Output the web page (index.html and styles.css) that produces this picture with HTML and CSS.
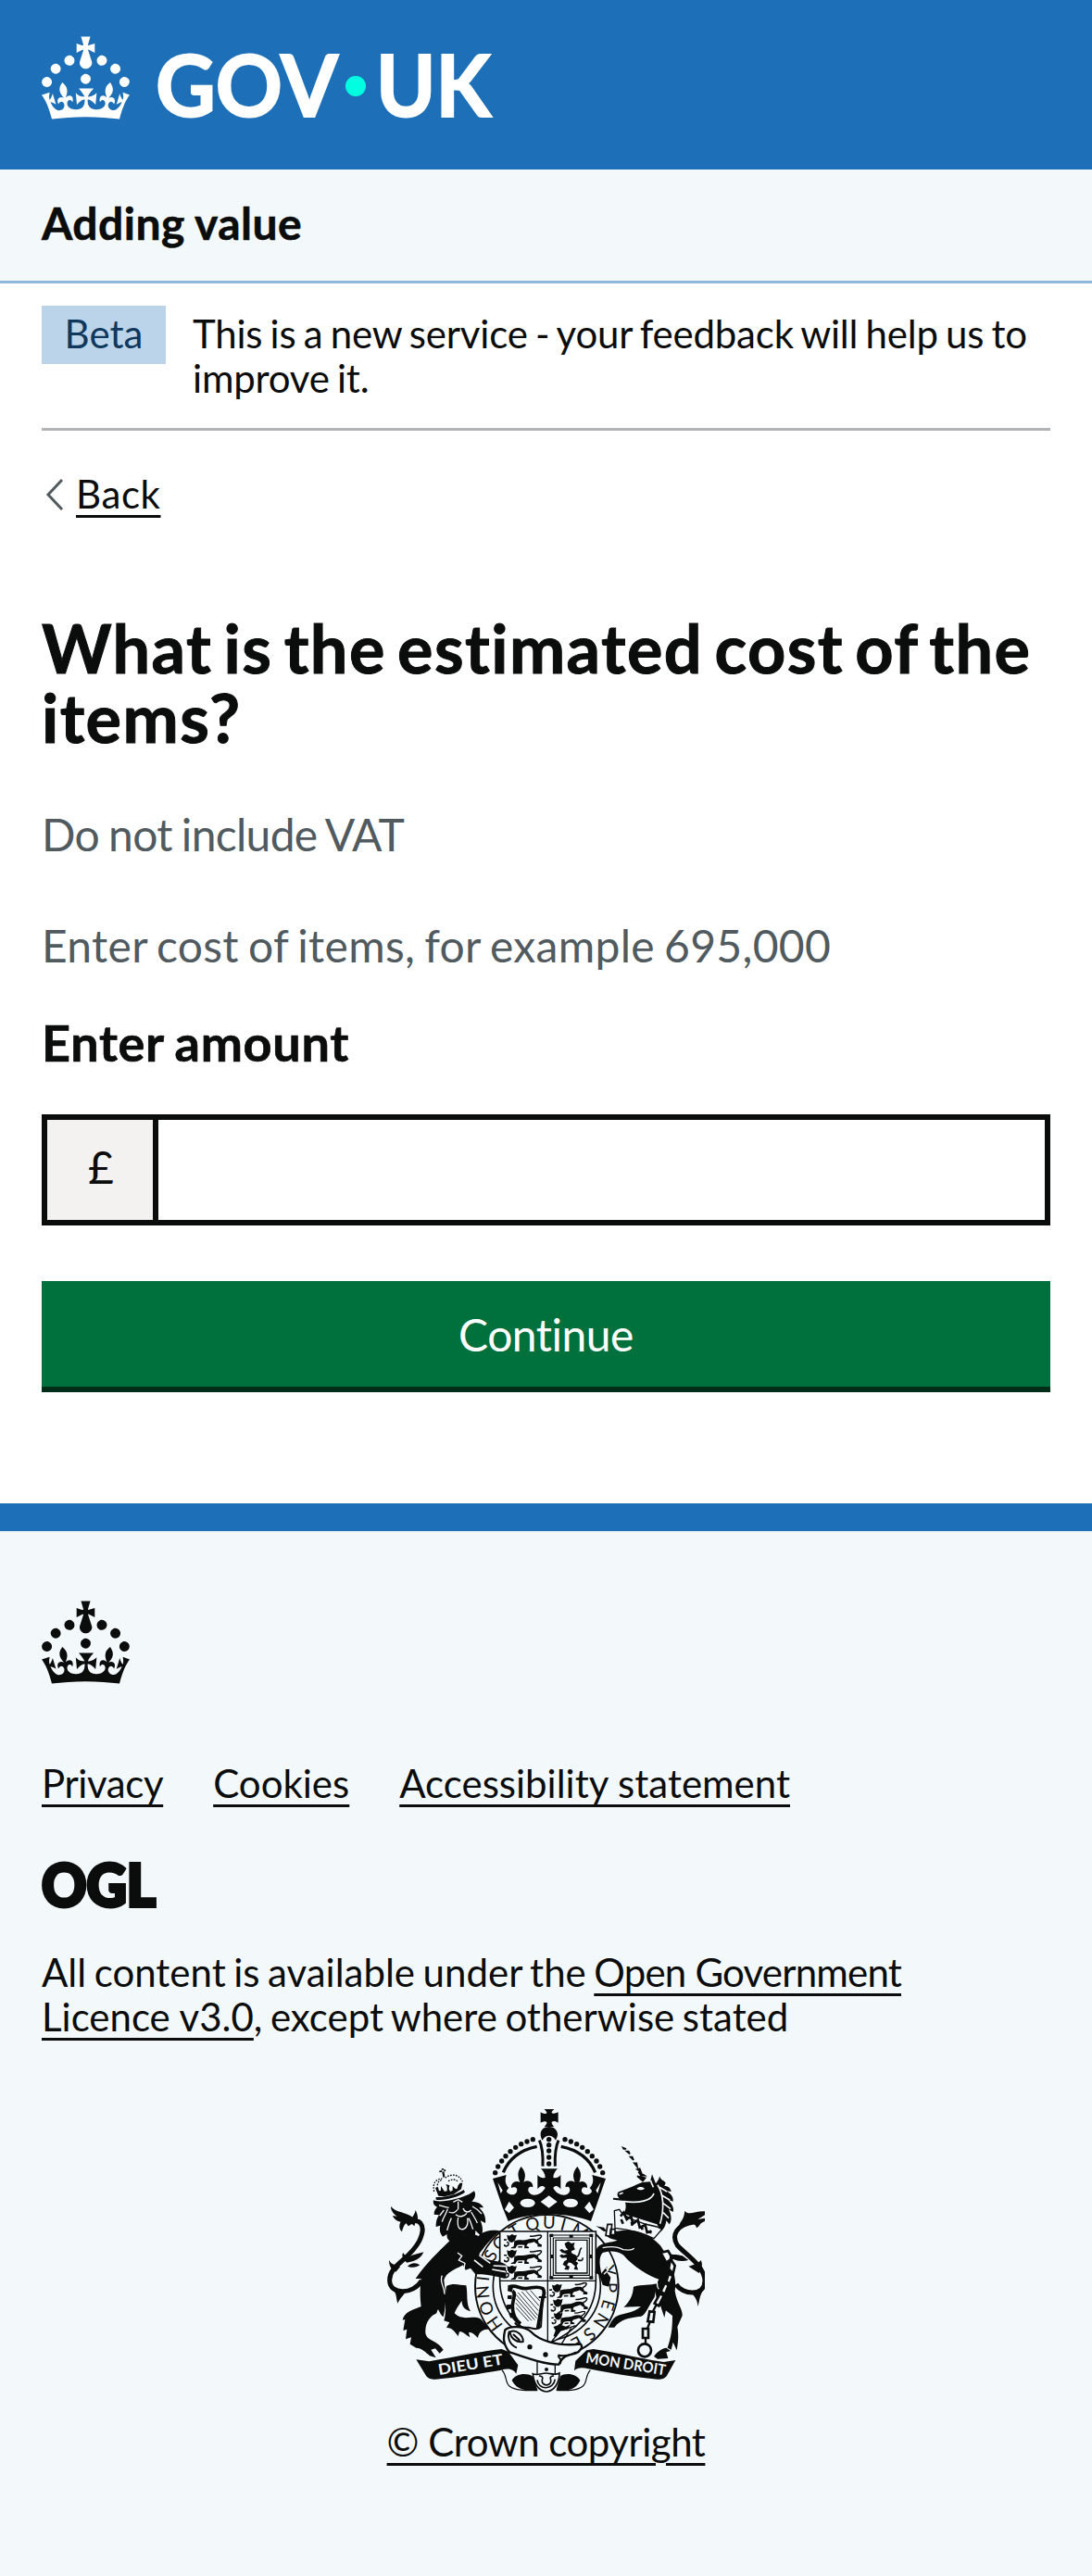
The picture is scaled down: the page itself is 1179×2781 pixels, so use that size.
FILE: index.html
```html
<!DOCTYPE html>
<html lang="en">
<head>
<meta charset="utf-8">
<meta name="viewport" content="width=device-width, initial-scale=1">
<title>What is the estimated cost of the items? - Adding value - GOV.UK</title>
<link rel="stylesheet" href="styles.css">
</head>
<body>
<svg class="defs" aria-hidden="true">
  <symbol id="tudor-crown" viewBox="0 0 32 30">
    <path fill-rule="evenodd" clip-rule="evenodd" d="M22.6 10.4c-1 .4-2-.1-2.4-1-.4-.9.1-2 1-2.4.9-.4 2 .1 2.4 1s-.1 2-1 2.4m-5.9 6.7c-.9.4-2-.1-2.4-1-.4-.9.1-2 1-2.4.9-.4 2 .1 2.4 1s-.1 2-1 2.4m10.8-3.7c-1 .4-2-.1-2.4-1-.4-.9.1-2 1-2.4.9-.4 2 .1 2.4 1s0 2-1 2.4m3.3 4.8c-1 .4-2-.1-2.4-1-.4-.9.1-2 1-2.4.9-.4 2 .1 2.4 1s-.1 2-1 2.4M17 4.7l2.3 1.2V2.5l-2.3.7-.2-.2.9-3h-3.4l.9 3-.2.2c-.1.1-2.3-.7-2.3-.7v3.4L15 4.7c.1.1.1.2.2.2l-1.3 4c-.1.2-.1.4-.1.6 0 1.1.8 2 1.9 2.2h.7c1-.2 1.9-1.1 1.9-2.1 0-.2 0-.4-.1-.6l-1.3-4c-.1-.2 0-.2.1-.3m-7.6 5.7c.9.4 2-.1 2.4-1 .4-.9-.1-2-1-2.4-.9-.4-2 .1-2.4 1s0 2 1 2.4m-5 3c.9.4 2-.1 2.4-1 .4-.9-.1-2-1-2.4-.9-.4-2 .1-2.4 1s.1 2 1 2.4m-3.2 4.8c.9.4 2-.1 2.4-1 .4-.9-.1-2-1-2.4-.9-.4-2 .1-2.4 1s0 2 1 2.4m14.8 11c4.4 0 8.6.3 12.3.8 1.1-4.5 2.4-7 3.7-8.8l-2.5-.9c.2 1.3.3 1.9 0 2.7-.4-.4-.8-1.1-1.1-2.3l-1.2 4c.7-.5 1.3-.8 2-.9-1.1 2.5-2.6 3.1-3.5 3-1.1-.2-1.7-1.2-1.5-2.1.3-1.2 1.5-1.5 2.1-.1 1.1-2.3-.8-3-2-2.3 1.9-1.9 2.1-3.5.6-5.6-2.1 1.6-2.1 3.2-1.2 5.5-1.2-1.4-3.2-.6-2.5 1.6.9-1.4 2.1-.5 1.9.8-.2 1.1-1.7 2.1-3.5 1.9-2.7-.2-2.9-2.1-2.9-3.6.7-.1 1.9.5 2.9 1.9l.4-4.3c-1.1 1.1-2.1 1.4-3.2 1.4.4-1.2 2.1-3 2.1-3h-5.4s1.7 1.9 2.1 3c-1.1 0-2.1-.2-3.2-1.4l.4 4.3c1-1.4 2.2-2 2.9-1.9-.1 1.5-.2 3.4-2.9 3.6-1.9.2-3.4-.8-3.5-1.9-.2-1.3 1-2.2 1.9-.8.7-2.3-1.2-3-2.5-1.6.9-2.2.9-3.9-1.2-5.5-1.5 2-1.3 3.7.6 5.6-1.2-.7-3.1 0-2 2.3.6-1.4 1.8-1.1 2.1.1.2.9-.3 1.9-1.5 2.1-.9.2-2.4-.5-3.5-3 .6 0 1.2.3 2 .9l-1.2-4c-.3 1.1-.7 1.9-1.1 2.3-.3-.8-.2-1.4 0-2.7l-2.9.9C1.3 23 2.6 25.5 3.7 30c3.7-.5 7.9-.8 12.3-.8"/>
  </symbol>
  <symbol id="passant" viewBox="0 0 130 46">
    <path d="M10 2l8 3 8-5 9 4 7-2-3 10-4 9-8 6-9-2-6-9z"/>
    <path d="M34 22c14-6 28 0 42-5 14-4 26-4 34 2l3 10 10 5-1 7-14-1 2-6-12-9c-8 4-18 3-22 7l-3 6 9 4-2 5H66l1-12c-10 0-18-1-24 1l-7 12H22l2-5 8-3z"/>
    <path d="M16 28l-7-3M16 28l-2 8-8 4M46 41h14M108 18c14-4 18-16 8-15-10 1-20 6-32 3" fill="none" stroke="#0b0c0c" stroke-width="4.5"/>
    <path d="M0 16l10 0-2 5-8-1zM0 32l8 4-3 5-6-3z"/>
  </symbol>
</svg>

<header class="header">
  <svg class="header-logo" viewBox="0 0 486 90" role="img" aria-label="GOV.UK">
    <use class="logo-crown" href="#tudor-crown" x="0" y="0" width="95" height="90"/>
    <g class="logo-word">
      <text x="123" y="87" textLength="197" lengthAdjust="spacingAndGlyphs">GOV</text>
      <text x="361" y="87" textLength="124" lengthAdjust="spacingAndGlyphs">UK</text>
    </g>
    <circle class="logo-dot" cx="339" cy="54" r="11"/>
  </svg>
</header>

<div class="service-navigation"><span class="service-name">Adding value</span></div>

<div class="container">
  <div class="phase-banner">
    <strong class="tag">Beta</strong>
    <span class="phase-text">This is a new service - your feedback will help us to improve it.</span>
  </div>

  <a class="back-link" href="#"><svg class="chevron" viewBox="0 0 22 36"><path d="M20 2L5 18l15 16"/></svg><span class="link back-text">Back</span></a>

  <main>
    <h1 class="heading">What is the estimated cost of the items?</h1>
    <p class="hint hint-vat">Do not include VAT</p>
    <p class="hint hint-example">Enter cost of items, for example 695,000</p>
    <label class="label" for="amount">Enter amount</label>
    <div class="input-group">
      <div class="prefix" aria-hidden="true">£</div>
      <input class="input" id="amount" type="text" inputmode="numeric">
    </div>
    <button class="button" type="submit">Continue</button>
  </main>
</div>

<footer class="footer">
  <svg class="footer-crown"><use href="#tudor-crown" width="95" height="90"/></svg>
  <nav class="footer-links">
    <a class="link privacy" href="#">Privacy</a>
    <a class="link cookies" href="#">Cookies</a>
    <a class="link" href="#">Accessibility statement</a>
  </nav>
  <svg class="ogl" viewBox="0 0 123 50" role="img" aria-label="Open Government Licence">
    <text x="0" y="47.5" textLength="123" lengthAdjust="spacingAndGlyphs">OGL</text>
  </svg>
  <p class="licence">All content is available under the <a class="link ogl-link" href="#">Open Government <span class="ogl-version">Licence v3.0</span></a>, except where otherwise stated</p>

  <a class="copyright" href="#">
    <svg class="crest" viewBox="54 51 1029 918" aria-hidden="true">
      <!-- garter -->
      <circle class="bg line" cx="571" cy="625" r="232" stroke-width="6"/>
      <circle class="line" cx="571" cy="625" r="174" stroke-width="5"/>
      <g class="garter-text">
        <text x="571" y="437" transform="rotate(-125.5 571 625)">H</text>
        <text x="571" y="437" transform="rotate(-110 571 625)">O</text>
        <text x="571" y="437" transform="rotate(-95 571 625)">N</text>
        <text x="571" y="437" transform="rotate(-83 571 625)">I</text>
        <text x="571" y="437" transform="rotate(-61 571 625)">S</text>
        <text x="571" y="437" transform="rotate(-47 571 625)">O</text>
        <text x="571" y="437" transform="rotate(-30 571 625)">T</text>
        <text x="571" y="437" transform="rotate(-13 571 625)">Q</text>
        <text x="571" y="437" transform="rotate(2 571 625)">U</text>
        <text x="571" y="437" transform="rotate(15 571 625)">I</text>
        <text x="571" y="437" transform="rotate(31 571 625)">M</text>
        <text x="571" y="437" transform="rotate(76 571 625)">Y</text>
        <text x="571" y="437" transform="rotate(91 571 625)">P</text>
        <text x="571" y="437" transform="rotate(107 571 625)">E</text>
        <text x="571" y="437" transform="rotate(122 571 625)">N</text>
        <text x="571" y="437" transform="rotate(138 571 625)">S</text>
        <text x="571" y="437" transform="rotate(152 571 625)">E</text>
      </g>
      <!-- shield -->
      <path class="bg line" stroke-width="5" d="M419 447H730V608C730 710 665 770 575 812C490 770 421 710 419 608z"/>
      <path class="line" stroke-width="4" d="M574 447V812M419 607H730"/>
      <use href="#passant" x="432" y="456" width="130" height="46"/>
      <use href="#passant" x="432" y="506" width="130" height="46"/>
      <use href="#passant" x="432" y="557" width="130" height="46"/>
      <g transform="rotate(-4 650 690)">
        <use href="#passant" x="583" y="614" width="130" height="46"/>
        <use href="#passant" x="583" y="662" width="128" height="46"/>
        <use href="#passant" x="583" y="706" width="118" height="42"/>
        <path d="M588 752l22-6 18 8 16-6-10 14-24 4-16 20-8-4 8-18z"/>
      </g>
      <path class="line" stroke-width="3.5" d="M583 459H718V598H583zM592 468H709V589H592z"/>
      <path class="line" stroke-width="4" d="M600 475H702V582H600z"/>
      <path d="M580 455h12v10h-12zM709 455h12v10h-12zM580 592h12v10h-12zM709 592h12v10h-12zM644 458h12v9h-12zM644 590h12v9h-12zM583 522h9v12h-9zM709 522h9v12h-9z"/>
      <path transform="translate(84 67) scale(.87)" d="M626 482l14-8 12 8 12-4-4 14 5 12-14 6 2 8 16 8 6 14-8 8 10 6-6 10 6 16-16-2 4-12-14-12-10-2-6 10 10 6-4 12-16-2 6-10-12-8 6-12 10-6-2-8-16 2-10-8 8-6 8 4 12-6-18-4-10-10 10-4 8 6 14-2-8-10z"/>
      <path class="line" stroke-width="5" d="M664 530c18 0 8-22 20-30M672 540c10 2 14 4 16-8"/>
      <!-- harp -->
      <path class="line" stroke-width="11" d="M448 628c20-12 34 6 56 4c22-2 34-10 54 0c8 10 4 20 0 32l-16 96M460 640c14 8 0 26 0 50c0 24 10 44 26 56"/>
      <path class="line" stroke-width="6" d="M558 664l-6 92c-8 10-28 6-40 2c-20 2-40-6-44-16M545 660h24"/>
      <path d="M446 620l16 8-4 16-14-4zM444 655l14-2v14l-14-2zM440 685l16-2 2 14-16 4zM448 714l14-6 8 12-16 8z"/>
      <path class="line" stroke-width="2.5" d="M478 645l64 74M490 642l54 62M504 640l42 48M518 638l30 34M472 652l66 76M470 664l62 70M470 678l52 58M472 694l40 44"/>
      <!-- buckle and strap -->
      <path class="line" stroke-width="4" d="M585 806l30-38 50-16M600 830l-10-34M650 760l-40 66"/>
      <path class="bg line" stroke-width="7" d="M436 766C450 752 500 752 522 774C545 798 600 820 680 812C690 820 680 836 664 842C640 848 622 850 610 878C560 880 490 850 450 838C428 810 430 790 436 766z"/>
      <path class="line" stroke-width="6" d="M450 770c-8 20 0 44 24 54M452 772c20-10 44 12 42 32c-20 4-40-10-42-32zM462 780l22 20M614 876c10-24-10-16-4-28c16 4 40 0 56-10"/>
      <circle cx="516" cy="821" r="8"/><circle cx="567" cy="846" r="8"/><circle cx="570" cy="894" r="6"/>
      <path class="line" stroke-width="4" d="M540 868v40M598 880v28"/>
      <!-- scroll -->
      <path d="M148 862L190 868C260 856 340 838 425 828L446 836L478 880L472 908C462 890 442 890 424 896C340 910 270 922 210 926C196 926 188 924 180 914z"/>
      <path d="M988 864L950 870C880 860 800 840 722 828L700 832L664 866L660 898C672 886 688 888 706 892C790 908 860 920 930 926C946 926 954 922 960 914z"/>
      <path class="line" stroke-width="3.5" d="M426 896c18 20 8 38 24 52c20 16 60 14 90 14M712 896c-18 20-8 38-24 52c-20 16-50 14-84 14"/>
      <path d="M458 930c10-24 50-26 66-14l18 46c-34 0-66 2-84-32zM679 930c-10-24-50-26-64-14l-14 46c34 0 62 2 78-32z"/>
      <path class="bg line" stroke-width="5" d="M526 908c14 6 28-2 42-2s30 8 44 0c0 30-16 58-42 60c-28-2-42-30-44-58z"/>
      <path class="line" stroke-width="5" d="M546 914c10 4 14 4 10 14c-4 22 32 22 28 0c-4-10 0-10 10-14M540 928c4 34 52 34 58-2"/>
      <g class="motto">
        <text x="222" y="912" textLength="212" lengthAdjust="spacingAndGlyphs" transform="rotate(-9.5 222 912)">DIEU ET</text>
        <text x="695" y="872" textLength="262" lengthAdjust="spacingAndGlyphs" transform="rotate(9 695 872)">MON DROIT</text>
      </g>
      <!-- royal crown -->
      <path class="bg" d="M400 270L440 410C520 380 640 380 712 412L762 270L640 150H515z"/>
      <path d="M551 61c10 6 18 6 20 2c0-4-5-8-8-12h32c-4 4-9 8-8 12c4 4 12 2 21-2v34c-9-6-17-6-21-2c-1 6 4 10 8 15h-32c4-5 9-9 8-15c-4-4-12-2-20 2z"/>
      <path d="M578 108c16 0 27 10 28 24c0 10-4 14-6 20c-10-20-34-20-43 0c-4-6-6-12-6-20c0-14 11-24 27-24z"/>
      <path class="line" stroke-width="9" d="M547 152c12 26 12 56 11 84M609 152c-12 26-12 56-11 84"/>
      <path class="line" stroke-width="10" d="M539 172C490 182 450 208 430 256M617 172C668 182 708 208 728 256"/>
      <g>
        <circle cx="578" cy="149" r="8"/><circle cx="578" cy="167" r="8"/><circle cx="578" cy="186" r="8"/><circle cx="578" cy="207" r="8"/><circle cx="578" cy="228" r="8"/>
        <circle cx="526" cy="149" r="8"/><circle cx="507" cy="156" r="8"/><circle cx="488" cy="164" r="8"/><circle cx="470" cy="175" r="8"/><circle cx="453" cy="188" r="8"/><circle cx="438" cy="203" r="8"/><circle cx="425" cy="219" r="8"/><circle cx="413" cy="237" r="8"/><circle cx="404" cy="257" r="8"/>
        <circle cx="630" cy="149" r="8"/><circle cx="649" cy="156" r="8"/><circle cx="668" cy="164" r="8"/><circle cx="686" cy="175" r="8"/><circle cx="703" cy="188" r="8"/><circle cx="718" cy="203" r="8"/><circle cx="732" cy="219" r="8"/><circle cx="743" cy="237" r="8"/><circle cx="752" cy="257" r="8"/>
      </g>
      <path d="M396 276L440 264C434 284 438 296 448 306C442 312 440 316 442 320C454 332 470 330 474 318C478 306 468 300 456 306C454 290 470 280 484 288C476 264 476 254 488 237C502 254 504 266 496 288C508 278 528 286 526 304C516 298 508 306 512 318C520 336 552 332 566 306C558 296 548 300 541 310V264C550 274 560 276 566 272C566 262 560 252 552 244H606C598 252 592 262 592 272C598 276 608 274 616 264V310C608 300 600 296 592 306C604 332 638 336 645 318C648 306 642 298 632 304C630 286 648 278 662 288C654 266 656 254 670 237C682 254 684 264 676 288C688 280 704 290 702 306C690 300 682 306 684 318C690 330 706 332 716 320C718 316 716 312 710 306C720 296 724 284 718 264L762 276L714 414C640 384 516 384 446 414L428 370z"/>
      <path class="bg" d="M412 288l16 26-6 10zM746 288l-16 26 6 10zM551 351l27-20 27 20-27 20zM435 376l14-26 16 20-16 18zM723 376l-14-26-16 20 16 18z"/>
      <ellipse class="bg" cx="509" cy="355" rx="24" ry="14"/><ellipse class="bg" cx="648" cy="355" rx="24" ry="14"/>
      <!-- lion -->
      <path class="line" stroke-width="15" d="M166 606C138 654 62 652 62 606C60 556 126 540 158 478C184 424 156 396 118 424"/>
      <path d="M66 366C86 390 116 380 148 410L142 430C126 412 110 412 102 448C92 440 92 424 98 416C84 414 74 404 72 396L86 398C72 388 66 378 66 366zM132 404C140 396 144 388 146 378C154 394 154 404 152 414zM60 540C70 560 84 550 96 562L82 578C66 572 60 556 60 540zM118 548C104 538 100 524 106 516C112 530 124 530 134 524L172 514C164 534 144 544 118 548zM120 560C136 566 150 564 160 556C148 546 130 548 120 560zM88 680C82 656 84 646 74 638L112 644C106 656 96 662 88 680z"/>
      <path d="M256 478C290 460 330 450 350 462C364 444 404 440 420 446C390 470 366 500 352 520C376 548 420 538 440 556C434 566 446 580 436 600C400 590 362 584 340 586L324 566L308 572L300 556C270 572 246 580 238 604C240 630 250 664 236 724C216 706 222 686 214 712C196 720 176 740 178 776C184 804 214 796 236 830L224 842L210 826L196 830L212 856L192 850C176 836 168 826 148 824L128 812L132 790L114 796L118 764L106 768L112 732L104 734C108 708 140 700 164 690C160 664 160 628 164 600L146 600C180 550 220 514 256 478z"/>
      <path d="M246 624C270 612 290 622 310 622C316 650 308 680 324 706C304 700 296 690 296 672C286 686 278 696 272 712C300 740 330 716 356 730L388 764C370 762 350 770 348 792C336 780 330 772 318 774L322 790C304 778 298 770 288 772L284 786C272 772 268 760 246 758L256 742L238 736C248 704 238 660 246 624z"/>
      <path class="bgline" stroke-width="4" d="M282 516l14 10-10 14 20 10-4 22M232 590c-10 20 6 30 8 60"/>
      <path d="M204 346C224 356 300 342 336 316C344 330 336 344 328 350C350 352 360 358 366 370L352 370C370 388 374 404 372 420L356 412C366 436 364 450 358 462L340 444C340 466 334 474 322 478L310 458C296 466 276 476 266 482C252 476 246 470 248 456L234 464C222 450 224 436 226 428L212 432C212 412 216 404 222 394L206 392C206 378 212 372 216 368C204 364 202 354 204 346z"/>
      <path class="bgline" stroke-width="4" d="M222 362c14 4 24 8 32 8M268 352l16-8 14 8M254 384c14 6 20 2 28-8M300 372c6 16 18 14 26 6M284 350v26M250 374c-6 20-16 30-18 42M262 404c-8 16-10 26-14 40M284 402c-4 26 0 36 10 38c14 2 24-12 20-36M326 384c10 16 16 26 20 36M330 366c12 6 22 14 30 24M276 392c14 12 30 4 36-4M238 378l-14 18M318 404c8 14 10 26 14 36"/>
      <path d="M212 336C240 338 280 328 302 312L306 320C284 336 240 348 212 344zM224 256l20-4-2-6-20 5zM230 244l7-1 4 28-6 1zM210 306l8-4 4 14 6-2 0-14 8 12 4 6 8-2 0-14-4-8 12 4-2 10 4 10 8-4 0-14 8 8 6 2 4-12 6-8 8 0-4 20-24 16-30 8-20-2z"/>
      <path class="line" stroke-width="4" stroke-dasharray="5 4" d="M206 318c-6-28 6-40 26-42M242 274c20-16 46-12 56 12M217 298c0-10 6-16 16-18M252 284c14-8 24-6 32 2"/>
      <path class="bgline" stroke-width="5" d="M336 540l28 22M352 524l36 26M394 570l44 8M398 558l40 2"/>
      <!-- unicorn -->
      <path class="line" stroke-width="15" d="M990 618C1010 652 1082 660 1083 606C1080 556 1018 520 994 492C974 460 990 424 1050 416"/>
      <path d="M1018 380C1030 398 1052 380 1083 382V394L1060 408L1083 404V414C1062 422 1070 428 1056 436C1054 424 1044 420 1030 426L1000 440C998 410 1014 420 1018 380zM960 516C972 524 990 520 1010 526L1030 540C1000 548 974 540 960 516zM1030 560C1046 556 1060 552 1070 540C1078 556 1072 570 1064 582zM1060 690C1060 666 1046 656 1036 640L1076 640C1064 660 1066 676 1060 690z"/>
      <path d="M820 180l-2-4 10 4zM830 188l10 8-4-8zM842 206l10 10-4-10zM854 226l10 12-2-12zM864 246l12 8-4-10zM868 254l20 12-12 0zM864 268l26 6-8 10z" stroke="#0b0c0c" stroke-width="5"/>
      <path d="M906 286L912 262L924 292C930 284 936 276 936 268C942 284 950 280 956 290L952 300C966 300 972 308 974 318L958 316C974 326 982 336 980 350L964 344C978 360 984 372 980 384L966 376C976 396 976 414 968 424L958 412C956 430 950 440 940 448L928 424L820 390C830 372 828 356 822 348L786 344L786 338L806 340C796 330 798 318 812 316C840 306 860 296 880 288z"/>
      <path class="bgline" stroke-width="5" d="M930 296c20 30 22 80 8 126M820 350c50 6 90-2 98-26M936 304l24 14M944 330l26 16M948 356l24 18M948 386l18 18M806 326l12-4M908 282c0 10 6 12 8 22"/>
      <path class="bg" d="M862 308c8-8 20-6 26 0c-8 6-18 6-26 0z"/>
      <path class="bg line" stroke-width="4" d="M790 380L806 376C820 402 880 424 928 432L944 440L918 470C880 450 830 440 792 436z"/>
      <path class="line" stroke-width="8" d="M810 398l10-12 10 22 14-10 6 24 16-12 6 24 18-8 6 24 14-4M812 408l6 14M846 416l2 12M880 430l0 12M908 444l-2 10"/>
      <path d="M744 438l-14-8 26 4 10 14c-10 0-16-4-22-10z"/>
      <path d="M800 446C850 436 900 450 936 490C950 506 960 530 974 560C986 590 990 610 986 640C992 680 1012 700 1010 720L994 756C998 780 998 800 992 832L980 806L974 830L962 824C974 790 978 764 978 720L930 682L920 630L934 602C900 590 850 560 820 524C800 508 770 510 752 516C738 530 742 560 750 590L728 582C730 560 734 540 730 510C740 480 770 486 800 476C780 470 766 470 764 452C776 440 790 446 800 446z"/>
      <path d="M852 626C880 618 908 622 928 616L920 660C900 690 890 720 876 722C840 726 810 730 790 758L770 758C780 740 786 724 806 718C830 710 852 710 876 690L820 692C838 676 850 656 852 626zM930 860L918 852C926 838 944 826 958 824L972 834L958 838L964 858zM742 590l24-30 0 20 12 16-6 30-20-6zM940 690l12 36 6-30z"/>
      <path class="bgline" stroke-width="4" d="M752 500c20-4 46-6 66 6c14 2 28 4 36-4M922 604c14 6 0 20 12 30M756 560l14 12-14 14"/>
      <path class="bg line" stroke-width="5" d="M768 424l14 0-4 40-16-4zM778 440h14v18h-16z"/>
      <g class="bg line" stroke-width="8">
        <path d="M940 516l24-6 14 24-20 14zM972 536l14 22-6 26-14-16zM966 584l14 8-12 30-12-6zM956 608l12 8-14 34-14-8zM938 648l12 8-16 32-14-8zM904 706l16 2-4 32-18-2zM882 762h18v30h-18z"/>
        <circle cx="888" cy="832" r="21"/>
      </g>
      <path class="line" stroke-width="7" d="M926 684l-12 24M906 738l-10 26M891 790v22"/>
    </svg>
    <span class="link">© Crown copyright</span>
  </a>
</footer>
</body>
</html>
```
FILE: styles.css
```css
* { box-sizing: border-box; }

body {
  margin: 0;
  background: #fff;
  color: #0b0c0c;
  font-family: Lato, "Open Sans", sans-serif;
  font-size: 42px;
  line-height: 48px;
  font-variant-ligatures: none;
}

p, h1 { margin: 0; }

.defs { display: none; }

.link {
  color: #0b0c0c;
  text-decoration: underline;
  text-decoration-thickness: 3px;
  text-underline-offset: 7px;
}

/* Header */
.header {
  height: 183px;
  padding: 39px 45px 0;
  background: #1d70b8;
}
.header-logo { display: block; width: 486px; height: 90px; overflow: visible; fill: #fff; }
.logo-word { font-size: 91px; font-weight: 700; stroke: #fff; stroke-width: 2px; }
.logo-dot { fill: #00ffe0; }

.service-navigation {
  height: 123px;
  padding: 28px 45px 0;
  background: #f3f8fa;
  border-bottom: 3px solid #8eb8dc;
}
.service-name {
  display: block;
  font-size: 48px;
  font-weight: 700;
  line-height: 60px;
  letter-spacing: 0.5px;
  word-spacing: -1px;
  -webkit-text-stroke: 0.6px #0b0c0c;
}

.container { padding: 0 45px; }

/* Phase banner */
.phase-banner {
  display: flex;
  align-items: flex-start;
  gap: 29px;
  height: 159px;
  padding-top: 24px;
  border-bottom: 3px solid #b1b4b6;
}
.tag {
  flex: none;
  width: 134px;
  height: 63px;
  padding-top: 6px;
  background: #bbd4ea;
  color: #0f385c;
  font-weight: 400;
  text-align: center;
}
.phase-text { padding-top: 6px; letter-spacing: -0.2px; word-spacing: -2.3px; }

/* Back link */
.back-link {
  display: flex;
  align-items: flex-start;
  width: max-content;
  margin-top: 44px;
  text-decoration: none;
}
.chevron { width: 22px; height: 36px; margin: 7px 13px 0 2px; }
.chevron path { fill: none; stroke: #505a5f; stroke-width: 3; }
.back-text { letter-spacing: 0.6px; }

/* Question */
.heading {
  margin-top: 105px;
  font-size: 72px;
  font-weight: 700;
  line-height: 75px;
  letter-spacing: 1.4px;
  word-spacing: -6.5px;
  -webkit-text-stroke: 1px #0b0c0c;
}
.hint { color: #505a5f; font-size: 48px; line-height: 60px; }
.hint-vat { margin-top: 59px; letter-spacing: -0.7px; word-spacing: -1.5px; }
.hint-example { margin-top: 60px; letter-spacing: 0.3px; word-spacing: -2.5px; }
.label {
  display: block;
  margin-top: 45px;
  font-size: 54px;
  font-weight: 700;
  line-height: 60px;
  letter-spacing: 0.7px;
  word-spacing: -2px;
  -webkit-text-stroke: 0.7px #0b0c0c;
}

.input-group { display: flex; height: 120px; margin-top: 47px; }
.prefix {
  width: 126px;
  padding: 21px 4px 0 0;
  background: #f3f2f1;
  border: 6px solid #0b0c0c;
  border-right: 0;
  font-size: 48px;
  line-height: 60px;
  text-align: center;
}
.input {
  flex: 1;
  min-width: 0;
  border: 6px solid #0b0c0c;
  border-radius: 0;
  padding: 6px 12px;
  background: #fff;
  font: inherit;
}
.prefix + .input { margin-left: -6px; }

.button {
  display: block;
  width: 100%;
  height: 120px;
  margin: 60px 0 120px;
  padding: 1px 0 0;
  border: 0;
  border-bottom: 6px solid #002d18;
  background: #00703c;
  color: #fff;
  font-family: inherit;
  font-size: 48px;
  line-height: 60px;
  letter-spacing: -0.5px;
}

/* Footer */
.footer {
  display: flex;
  flex-direction: column;
  min-height: 1158px;
  padding: 75px 45px 0;
  background: #f3f8fa;
  border-top: 30px solid #1d70b8;
}
.footer-crown { width: 95px; height: 90px; fill: #0b0c0c; }
.footer-links { display: flex; gap: 54px; margin-top: 83px; }
.privacy { letter-spacing: -0.4px; }
.ogl { width: 123px; height: 50px; margin-top: 61px; overflow: visible; }
.ogl text { font-size: 62px; font-weight: 900; fill: #0b0c0c; stroke: #0b0c0c; stroke-width: 4px; }
.licence { width: 960px; margin-top: 45px; word-spacing: -2.2px; }
.ogl-link { letter-spacing: -0.8px; word-spacing: 0; }
.ogl-version { letter-spacing: 0; }

.copyright {
  display: flex;
  flex-direction: column;
  align-items: center;
  align-self: center;
  gap: 29px;
  margin-top: 76px;
  letter-spacing: -0.5px;
  text-decoration: none;
  white-space: nowrap;
}

/* Royal coat of arms */
.crest { width: 343px; height: 306px; fill: #0b0c0c; }
.crest .line { fill: none; stroke: #0b0c0c; }
.crest .bg { fill: #f3f8fa; }
.crest .bgline { fill: none; stroke: #f3f8fa; }
.garter-text { font-size: 56px; font-weight: 400; text-anchor: middle; letter-spacing: 0; }
.motto { fill: #f3f8fa; font-size: 48px; font-weight: 700; letter-spacing: 0; }
```
